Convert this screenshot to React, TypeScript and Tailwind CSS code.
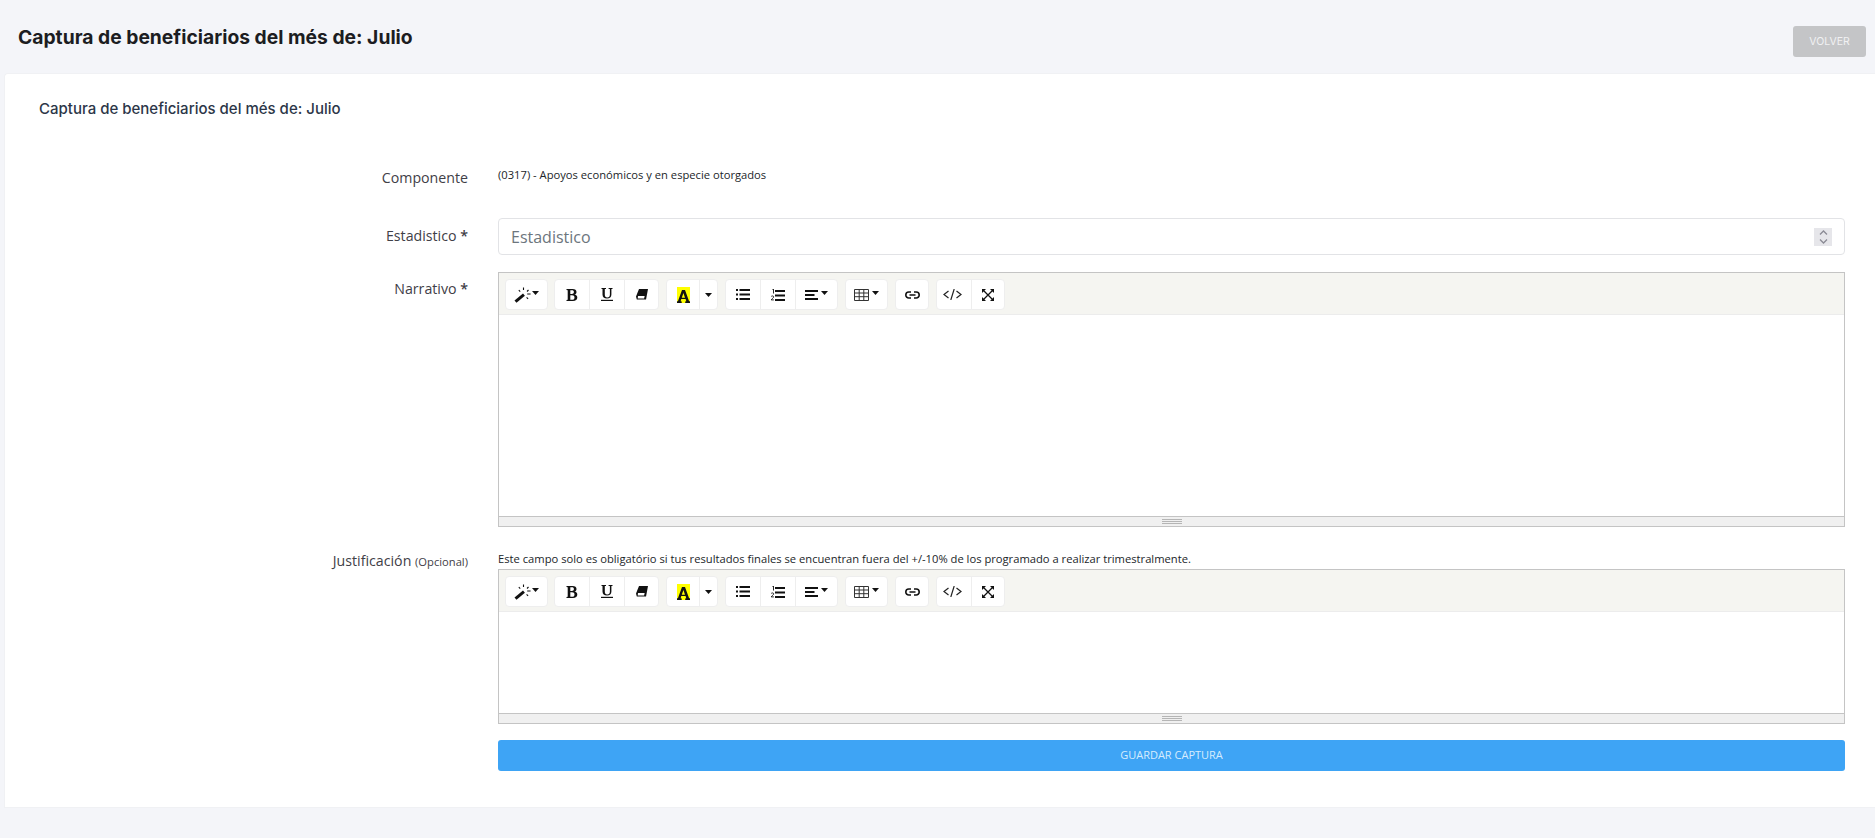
import type { ReactNode } from "react"

const ink = "#111"

function Caret() {
  return (
    <svg width="7" height="4" viewBox="0 0 7 4" className="shrink-0">
      <path d="M0 0h7L3.500 4z" fill={ink} />
    </svg>
  )
}

function Wand() {
  return (
    <svg width="18" height="16" viewBox="0 0 18 16">
      <path d="M0.500 13.600 9 6.600l1.900 2.200-8.400 7z" fill={ink} />
      <path d="M9.500 0.500v2.400M14.500 3 13 4.500M4.800 3l1.400 1.600M13.200 7h3.400M12.600 10.400l1.500 1.500" stroke={ink} strokeWidth="1.100" fill="none" />
    </svg>
  )
}

function Bold() {
  return (
    <svg width="12" height="12" viewBox="0 0 12 12">
      <path fillRule="evenodd" d="M0.500 0h6c2.600 0 4 1.100 4 3 0 1.300-.8 2.200-2.100 2.600 1.700.3 2.900 1.300 2.900 3 0 2.100-1.600 3.400-4.400 3.400H.5v-1l1.200-.2V1.200L.5 1zM4.300 1.200v3.900h1.600c1.300 0 2-.7 2-2s-.7-1.900-2-1.900zm0 5.100v4.500h1.900c1.500 0 2.300-.8 2.300-2.300S7.700 6.300 6 6.300z" fill={ink} />
    </svg>
  )
}

function Underline() {
  return (
    <svg width="12" height="13" viewBox="0 0 12 13">
      <path d="M0.500 0h4.500v.9l-1.200.2v5.400c0 1.900.8 2.900 2.500 2.900s2.600-1 2.600-2.900V1.100L7.600.9V0h3.900v.9l-1.100.2v5.500c0 2.500-1.600 3.900-4.400 3.900-3 0-4.500-1.300-4.500-3.900V1.100L.5.900z" fill={ink} />
      <path d="M0 11.800h12v1.200H0z" fill={ink} />
    </svg>
  )
}

function Eraser() {
  return (
    <svg width="12" height="11" viewBox="0 0 12 11">
      <path d="M3 0h9l-2 10.500H0.800L0 7.500z" fill={ink} />
      <path d="M2 7h6.700l-.6 2.600H1.700z" fill="#fff" />
    </svg>
  )
}

function HighlightA() {
  return (
    <span className="flex h-[16px] w-[13px] items-end justify-center bg-[#ffff00]">
      <svg width="13" height="13" viewBox="0 0 13 13">
        <path fillRule="evenodd" d="M5 0h3l4 11 1 .6V13H8.200v-1.400l1.100-.3-.7-2.200H4.300l-.7 2.200 1.100.3V13H0v-1.400l1-.6zM6.400 3 4.800 7.800h3.200z" fill={ink} />
      </svg>
    </span>
  )
}

function BulletList() {
  return (
    <svg width="14" height="11" viewBox="0 0 14 11">
      <path d="M0 0h2v2H0zM0 4.500h2v2H0zM0 9h2v2H0zM3.500 0H14v2H3.500zM3.500 4.500H14v2H3.500zM3.500 9H14v2H3.500z" fill={ink} />
    </svg>
  )
}

function NumberList() {
  return (
    <svg width="14" height="12" viewBox="0 0 14 12">
      <path d="M4 1h10v2H4zM4 5.500h10v2H4zM4 10h10v2H4z" fill={ink} />
      <path d="M1.500.5 2.500 0v4.500M0.200 7.500c.5-.8 2.500-.8 2.500.4 0 1-1.800 1.600-2.500 3h2.700" stroke={ink} strokeWidth=".9" fill="none" />
    </svg>
  )
}

function AlignLeft() {
  return (
    <svg width="13" height="10" viewBox="0 0 13 10">
      <path d="M0 0h13v2H0zM0 4h9.500v2H0zM0 8h13v2H0z" fill={ink} />
    </svg>
  )
}

function TableIcon() {
  return (
    <svg width="15" height="12" viewBox="0 0 15 12">
      <path d="M.5.500h14v11H.5zM.5 4h14M.5 7.700h14M5.200.5v11M9.800.5v11" stroke="#333" strokeWidth="1" fill="none" />
    </svg>
  )
}

function LinkIcon() {
  return (
    <svg width="15" height="8" viewBox="0 0 15 8">
      <path d="M6 1H3.800a3 3 0 0 0 0 6H6M9 1h2.200a3 3 0 0 1 0 6H9M4.500 4h6" stroke={ink} strokeWidth="1.600" fill="none" />
    </svg>
  )
}

function CodeIcon() {
  return (
    <svg width="19" height="11" viewBox="0 0 19 11">
      <path d="M5.500 2 1 5.500 5.500 9M13.500 2 18 5.500 13.500 9M11.200 0 7.800 11" stroke="#222" strokeWidth="1.200" fill="none" />
    </svg>
  )
}

function FullscreenIcon() {
  return (
    <svg width="12" height="12" viewBox="0 0 12 12">
      <path d="M1.500 1.500l9 9M10.500 1.500l-9 9" stroke={ink} strokeWidth="1.300" fill="none" />
      <path d="M0 0h4L0 4zM12 0v4L8 0zM0 12V8l4 4zM12 12H8l4-4z" fill={ink} />
    </svg>
  )
}

function Btn({ children, width }: { children: ReactNode; width: string }) {
  return (
    <div className={`flex h-full items-center justify-center gap-[3px] border-l border-[#eeeeee] first:border-l-0 ${width}`}>
      {children}
    </div>
  )
}

function Group({ children }: { children: ReactNode }) {
  return <div className="flex h-[31px] rounded-[4px] border border-[#eeeeee] bg-white">{children}</div>
}

function Editor({ bodyHeight }: { bodyHeight: string }) {
  return (
    <div className="border border-[#c4c4c4]">
      <div className="flex h-[42px] items-start gap-[7px] border-b border-[#ececec] bg-[#f5f5f1] pl-[6px] pt-[6px]">
        <Group>
          <Btn width="w-[41px]"><Wand /><span className="-mt-[4px] -ml-[3px]"><Caret /></span></Btn>
        </Group>
        <div className="-ml-px">
          <Group>
            <Btn width="w-[34px]"><Bold /></Btn>
            <Btn width="w-[35px]"><Underline /></Btn>
            <Btn width="w-[34px]"><Eraser /></Btn>
          </Group>
        </div>
        <Group>
          <Btn width="w-[32px]"><HighlightA /></Btn>
          <Btn width="w-[18px]"><Caret /></Btn>
        </Group>
        <Group>
          <Btn width="w-[34px]"><BulletList /></Btn>
          <Btn width="w-[35px]"><NumberList /></Btn>
          <Btn width="w-[42px]"><AlignLeft /><span className="-mt-[4px]"><Caret /></span></Btn>
        </Group>
        <Group>
          <Btn width="w-[41px]"><TableIcon /><span className="-mt-[4px]"><Caret /></span></Btn>
        </Group>
        <Group>
          <Btn width="w-[32px]"><LinkIcon /></Btn>
        </Group>
        <Group>
          <Btn width="w-[34px] pr-[3px]"><CodeIcon /></Btn>
          <Btn width="w-[33px]"><FullscreenIcon /></Btn>
        </Group>
      </div>
      <div className={`bg-white ${bodyHeight}`} />
      <div className="flex h-[10px] flex-col items-center justify-center gap-[1px] border-t border-[#c4c4c4] bg-[#f0f0f0]">
        <div className="h-px w-[20px] bg-[#b5b5b5]" />
        <div className="h-px w-[20px] bg-[#b5b5b5]" />
        <div className="h-px w-[20px] bg-[#b5b5b5]" />
      </div>
    </div>
  )
}

function Label({ children, className }: { children: ReactNode; className: string }) {
  return (
    <div className={`w-[463px] shrink-0 text-right text-[14.2px] leading-[20px] text-[#3f4047] ${className}`}>
      {children}
    </div>
  )
}

export default function App() {
  return (
    <div className="h-[838px] overflow-hidden bg-[#f4f5f9] font-['Open_Sans',sans-serif]">
      <header className="flex h-[73px] items-start justify-between pl-[18px] pr-[9px]">
        <h1 className="mt-[23px] font-['Inter',sans-serif] text-[19.300px] font-bold leading-[28px] text-[#1c1d22]">
          Captura de beneficiarios del més de: Julio
        </h1>
        <button className="mt-[26px] h-[31px] w-[73px] rounded-[3px] bg-[#c4c5c7] font-['Inter',sans-serif] text-[10.500px] text-[#f1f1f3]">
          VOLVER
        </button>
      </header>

      <main className="ml-[4px] h-[735px] rounded-tl-[4px] border-b border-l border-t border-[#f0f1f4] bg-white">
        <h2 className="pl-[34px] pt-[25px] font-['Inter',sans-serif] text-[15px] font-medium leading-[20px] text-[#2c3648]">
          Captura de beneficiarios del més de: Julio
        </h2>

        <div className="mt-[49px] flex gap-[30px] pr-[30px]">
          <Label className="">Componente</Label>
          <p className="-mt-[3px] text-[11.200px] leading-[20px] text-[#212529]">
            (0317) - Apoyos económicos y en especie otorgados
          </p>
        </div>

        <div className="mt-[30px] flex gap-[30px] pr-[30px]">
          <Label className="pt-[8px]">Estadistico <b className="font-semibold">*</b></Label>
          <div className="flex h-[37px] flex-1 items-center justify-between rounded-[4px] border border-[#e2e3e6] bg-white pl-[12px] pr-[12px]">
            <span className="text-[16px] text-[#6c757d]">Estadistico</span>
            <span className="flex h-[18px] w-[18px] items-center justify-center bg-[#e6e6ea]">
              <svg width="9" height="14" viewBox="0 0 9 14">
                <path d="M1 4.500 4.500 1 8 4.500M1 9.500 4.500 13 8 9.500" stroke="#8b8b95" strokeWidth="1.300" fill="none" />
              </svg>
            </span>
          </div>
        </div>

        <div className="mt-[17px] flex gap-[30px] pr-[30px]">
          <Label className="pt-[7px]">Narrativo <b className="font-semibold">*</b></Label>
          <div className="flex-1">
            <Editor bodyHeight="h-[201px]" />
          </div>
        </div>

        <div className="mt-[23px] flex gap-[30px] pr-[30px]">
          <Label className="pt-[1px]">Justificación <span className="text-[11.200px]">(Opcional)</span></Label>
          <div className="flex-1">
            <p className="h-[19px] text-[11.200px] leading-[18px] text-[#212529]">
              Este campo solo es obligatório si tus resultados finales se encuentran fuera del +/-10% de los programado a realizar trimestralmente.
            </p>
            <Editor bodyHeight="h-[101px]" />
            <button className="mt-[16px] h-[31px] w-full rounded-[3px] bg-[#3ea4f5] text-[11px] text-[#d6ecfd]">
              GUARDAR CAPTURA
            </button>
          </div>
        </div>
      </main>
    </div>
  )
}
